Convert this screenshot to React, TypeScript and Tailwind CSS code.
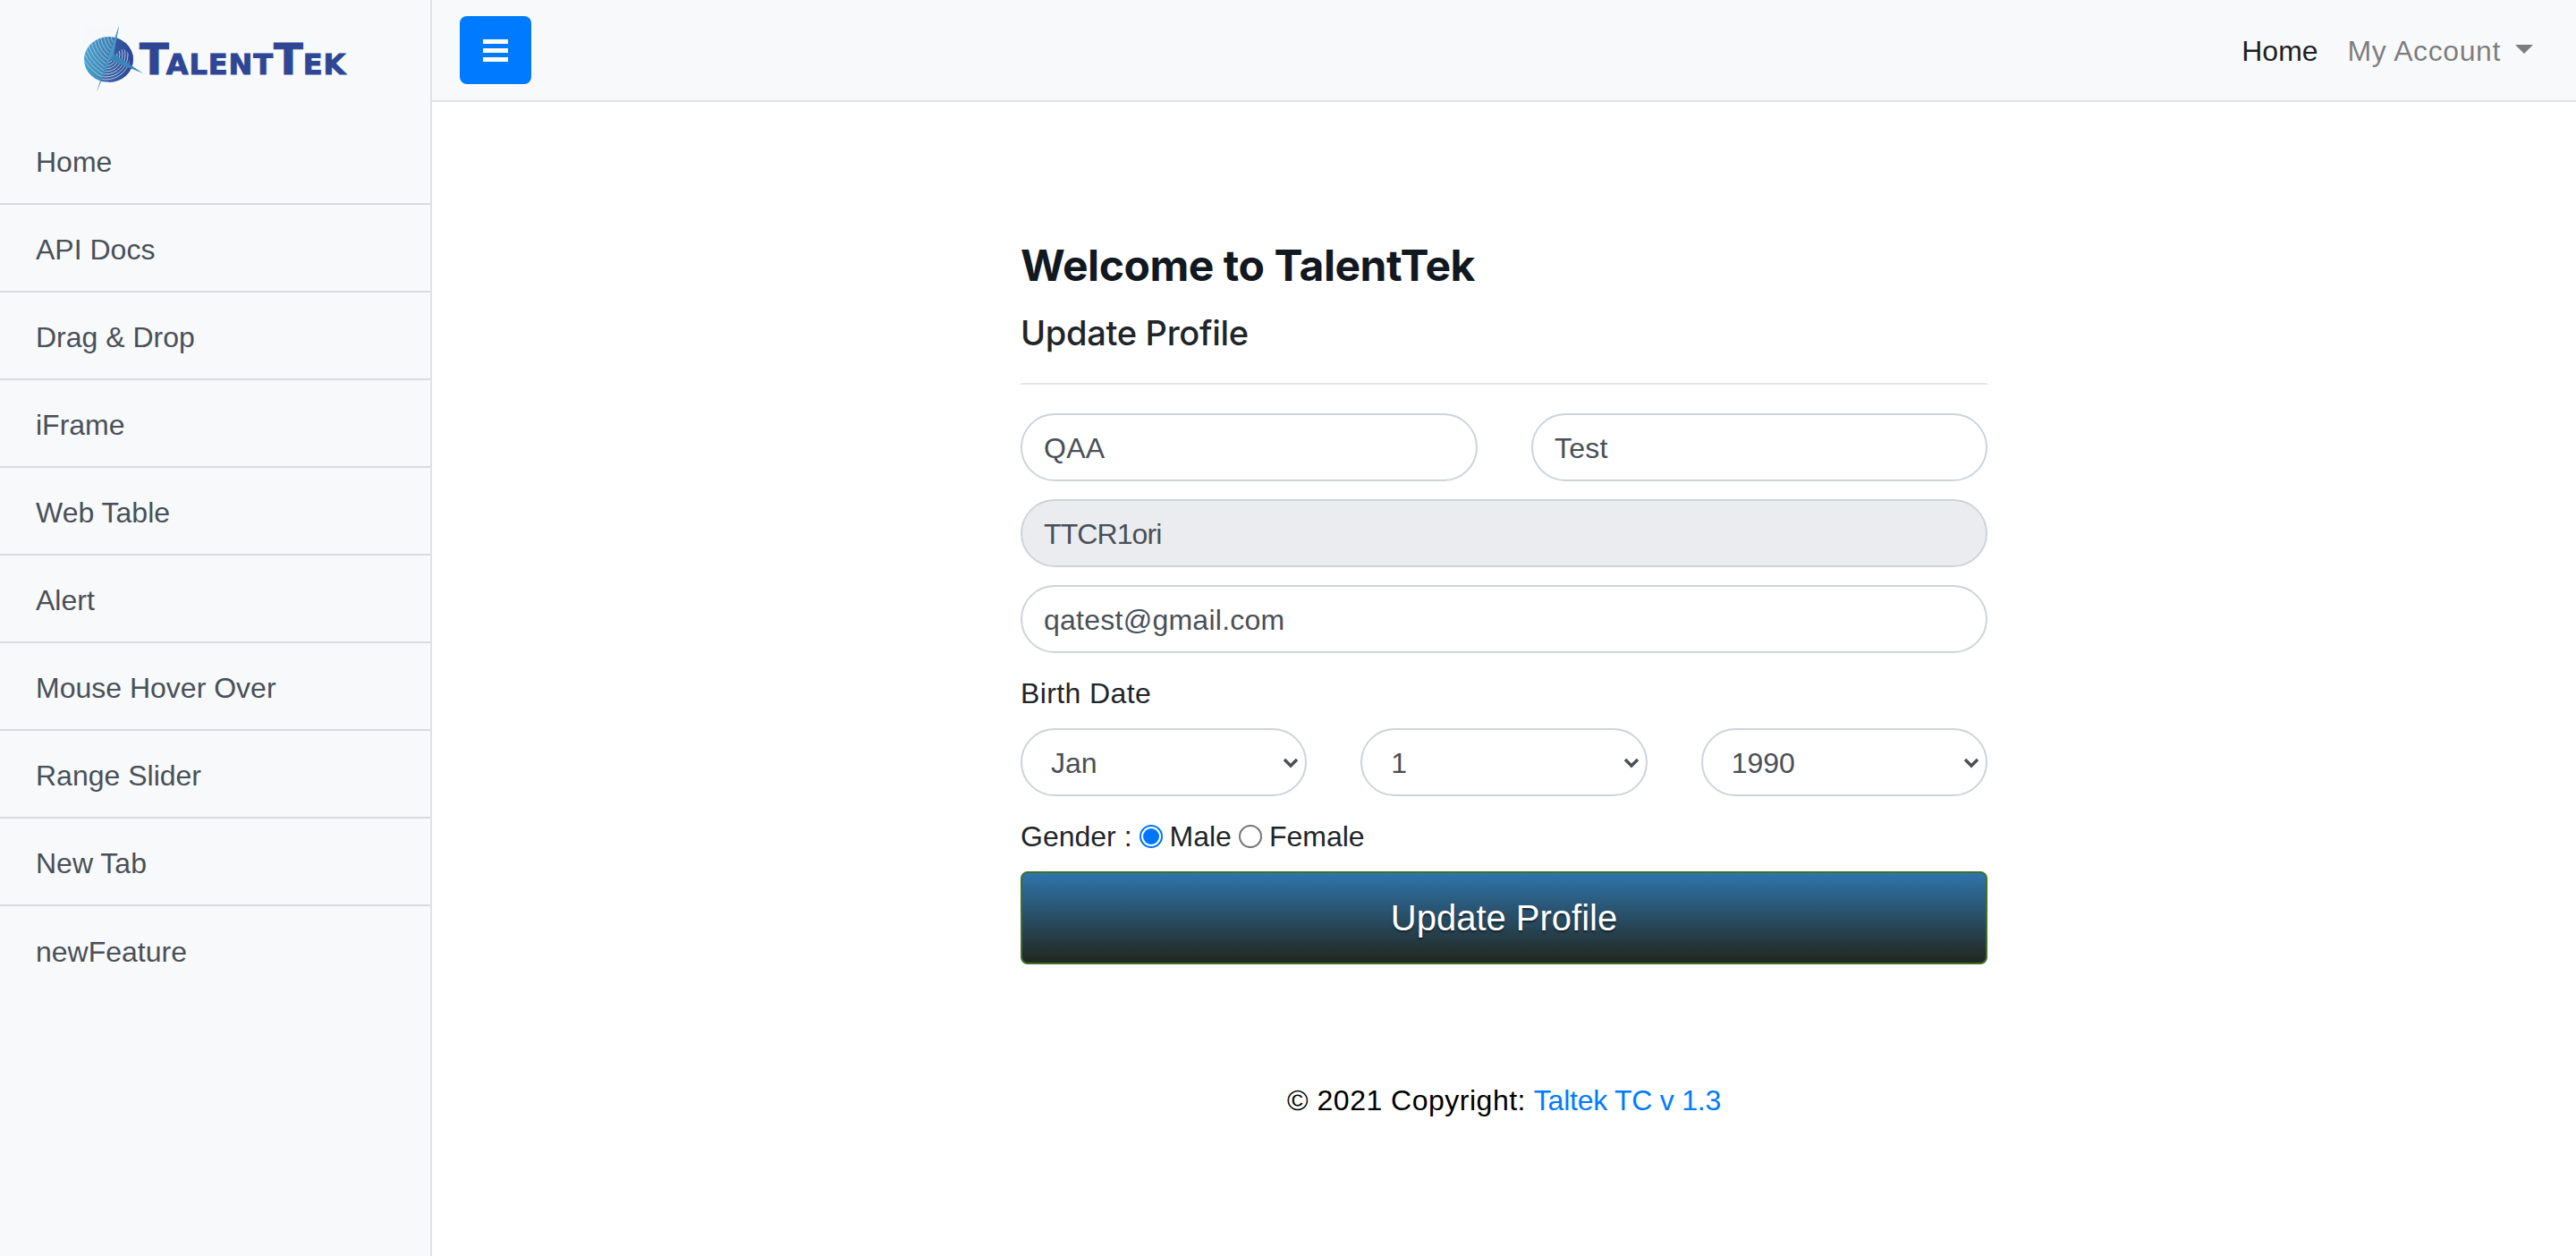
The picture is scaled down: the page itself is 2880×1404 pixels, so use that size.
import React from "react";

const items = ["Home", "API Docs", "Drag & Drop", "iFrame", "Web Table", "Alert", "Mouse Hover Over", "Range Slider", "New Tab", "newFeature"];

function Logo() {
  const left = [];
  for (let i = 0; i < 11; i++) {
    left.push(<circle key={i} cx="46" cy="10" r={16 + i * 3.8} fill="none" stroke="#eef5fa" strokeWidth="0.8" opacity="0.65" />);
  }
  const right = [];
  for (let i = 0; i < 8; i++) {
    right.push(<circle key={i} cx="24" cy="32" r={10 + i * 3} fill="none" stroke="#f4f6fb" strokeWidth="0.9" opacity="0.8" />);
  }
  return (
    <div className="flex items-center h-[131px] pl-[94px]">
      <svg width="66" height="74" viewBox="0 0 66 74" className="shrink-0 mt-[1px]">
        <defs>
          <linearGradient id="g" x1="0" x2="1" y1="0" y2="0">
            <stop offset="0" stopColor="#49a0cb" />
            <stop offset="0.55" stopColor="#3b7fb4" />
            <stop offset="1" stopColor="#2c3f92" />
          </linearGradient>
          <clipPath id="lc">
            <path d="M0 0 H39 L14 74 H0 Z" />
          </clipPath>
          <clipPath id="rc">
            <path d="M39 0 H66 V74 H14 Z" />
          </clipPath>
        </defs>
        <ellipse cx="27.5" cy="37.5" rx="27.5" ry="25.5" fill="url(#g)" />
        <g clipPath="url(#lc)">{left}</g>
        <g clipPath="url(#rc)">
          <ellipse cx="27.5" cy="37.5" rx="27.5" ry="25.5" fill="#2f4a9a" opacity="0.6" />
          {right.map((c, i) => (
            <g key={i} style={{ clipPath: "ellipse(27.5px 25.5px at 27.5px 37.5px)" }}>{c}</g>
          ))}
        </g>
        <path d="M39 0 L14 74 L29 38 L66 53 L33 31 Z" fill="#3a86b8" />
        <path d="M39 0 L14 74 L27 41 L33 31 Z" fill="#4b98c6" />
      </svg>
      <div className="ml-[-4px] mt-[1px] flex items-baseline text-[#2e4694] font-['DejaVu_Sans',sans-serif] font-bold leading-none [-webkit-text-stroke:1px_#2e4694]">
        <span className="text-[48px]">T</span>
        <span className="text-[32px] tracking-[0.9px] ml-[-3px]">ALENT</span>
        <span className="text-[48px]">T</span>
        <span className="text-[32px] tracking-[1px]">EK</span>
      </div>
    </div>
  );
}

function Chevron() {
  return (
    <svg width="18" height="12" viewBox="0 0 18 12" className="absolute right-[9px] top-[33px] pointer-events-none">
      <path d="M2 2 L9 9 L16 2" fill="none" stroke="#495057" strokeWidth="3.4" />
    </svg>
  );
}

function Select({ value }: { value: string }) {
  return (
    <div className="relative flex-1">
      <div className="h-[76px] bg-white border-2 border-[#ced4da] rounded-[38px] pl-[32px] pt-[1px] flex items-center text-[32px] text-[#495057]">{value}</div>
      <Chevron />
    </div>
  );
}

function Field({ value, disabled, cls }: { value: string; disabled?: boolean; cls?: string }) {
  return (
    <div className={`h-[76px] border-2 border-[#ced4da] rounded-[38px] px-[24px] pt-[1px] flex items-center text-[32px] text-[#495057] ${disabled ? "bg-[#ebecef] tracking-[-0.9px]" : "bg-white tracking-[0.25px]"} ${cls ?? ""}`}>
      {value}
    </div>
  );
}

export default function App() {
  return (
    <div className="flex min-h-[1404px] bg-white font-['Liberation_Sans',sans-serif] text-[32px]">
      <aside className="w-[483px] shrink-0 bg-[#f8f9fa] border-r-2 border-[#dee2e6]">
        <Logo />
        <ul>
          {items.map((t, i) => (
            <li key={t} className={`h-[98px] pl-[40px] pt-[3px] flex items-center text-[#495057] ${i < items.length - 1 ? "border-b-2 border-[#d9dcdf]" : ""}`}>
              {t}
            </li>
          ))}
        </ul>
      </aside>
      <div className="flex-1 flex flex-col">
        <header className="h-[114px] bg-[#f8f9fa] border-b-2 border-[#dee2e6] flex items-center justify-between pl-[31px] pr-[48px]">
          <button className="w-[80px] h-[76px] bg-[#007bff] rounded-[8px] flex flex-col items-center justify-center gap-[5px]">
            <span className="w-[28px] h-[5px] bg-white" />
            <span className="w-[28px] h-[5px] bg-white" />
            <span className="w-[28px] h-[5px] bg-white" />
          </button>
          <nav className="flex items-center pt-[2px]">
            <span className="text-black/90">Home</span>
            <span className="text-black/50 ml-[33px] tracking-[0.6px]">My Account</span>
            <span className="ml-[16px] mb-[4px] w-0 h-0 border-t-[10px] border-x-[10px] border-t-black/50 border-x-transparent" />
          </nav>
        </header>
        <main className="flex-1 flex flex-col items-center">
          <div className="w-[1081px] mt-[154px]">
            <h3 className="text-[48px] font-bold leading-[58px] tracking-[-0.45px] font-['Inter',sans-serif] text-[#12181f]">Welcome to TalentTek</h3>
            <h4 className="mt-[23px] text-[38px] font-medium leading-[46px] tracking-[-0.3px] font-['Inter',sans-serif] text-[#212529]">Update Profile</h4>
            <hr className="mt-[33px] border-t-2 border-black/10" />
            <div className="mt-[32px] flex flex-col gap-[20px]">
              <div className="flex justify-between">
                <Field value="QAA" cls="w-[511px]" />
                <Field value="Test" cls="w-[510px]" />
              </div>
              <Field value="TTCR1ori" disabled />
              <Field value="qatest@gmail.com" />
            </div>
            <div className="mt-[26px] leading-[38px] tracking-[0.4px] text-[#212529]">Birth Date</div>
            <div className="mt-[20px] flex gap-[60px]">
              <Select value="Jan" />
              <Select value="1" />
              <Select value="1990" />
            </div>
            <div className="mt-[26px] h-[38px] flex items-center text-[#212529]">
              <span>Gender :</span>
              <span className="ml-[8px] w-[26px] h-[26px] rounded-full border-2 border-[#0075ff] flex items-center justify-center">
                <span className="w-[18px] h-[18px] rounded-full bg-[#0075ff]" />
              </span>
              <span className="ml-[8px]">Male</span>
              <span className="ml-[8px] w-[26px] h-[26px] rounded-full border-2 border-[#767676] bg-white" />
              <span className="ml-[8px]">Female</span>
            </div>
            <button className="mt-[20px] w-full h-[104px] rounded-[8px] border-2 border-[#3d7028] bg-[linear-gradient(to_bottom,#2f74ab,#22261f)] text-white text-[40px] font-['Liberation_Sans',sans-serif] [text-shadow:0_2px_2px_rgba(0,0,0,0.5)]">
              Update Profile
            </button>
            <p className="mt-[128px] text-center text-black leading-[48px]">
              <span className="tracking-[0.5px]">© 2021 Copyright:</span> <span className="tracking-[-0.25px] text-[#007bff]">Taltek TC v 1.3</span>
            </p>
          </div>
        </main>
      </div>
    </div>
  );
}
